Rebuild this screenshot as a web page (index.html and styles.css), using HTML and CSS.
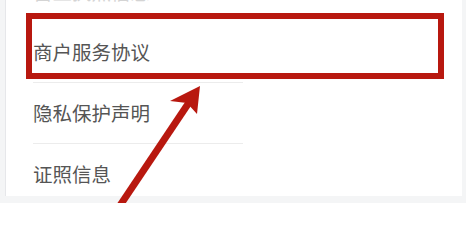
FILE: index.html
```html
<!DOCTYPE html>
<html lang="zh-CN">
<head>
<meta charset="utf-8">
<title>设置</title>
<link rel="stylesheet" href="styles.css">
</head>
<body>
<div class="page">
  <div class="card">
    <ul class="list">
      <li class="row row-first"><span class="label faded">营业执照信息</span></li>
      <li class="row"><span class="label">商户服务协议</span></li>
      <li class="row"><span class="label">隐私保护声明</span></li>
      <li class="row"><span class="label">证照信息</span></li>
    </ul>
  </div>
  <div class="highlight"></div>
  <svg class="arrow" width="466" height="203" viewBox="0 0 466 203">
    <line x1="190" y1="101" x2="117" y2="210" stroke="#b8180f" stroke-width="7"/>
    <polygon points="200,86 170,101 187,103 197,114" fill="#b8180f"/>
  </svg>
</div>
</body>
</html>
```

FILE: styles.css
```css
html, body {
  margin: 0;
  padding: 0;
  background: #ffffff;
}
body {
  font-family: "Noto Sans CJK SC", "Noto Sans", sans-serif;
  overflow: hidden;
}
.page {
  position: relative;
  width: 466px;
  height: 203px;
  overflow: hidden;
  background: #f4f5f6;
}
.card {
  margin-left: 5px;
  margin-right: 4px;
  height: 196px;
  background: #ffffff;
  border-left: 1px solid #e6e7ea;
  overflow: hidden;
}
.list {
  list-style: none;
  margin: -39px 0 0 0;
  padding: 0 0 0 27px;
}
.row {
  height: 60px;
  display: flex;
  align-items: center;
  border-bottom: 1px solid #ececec;
  width: 210px;
}
.row-first {
  border-bottom-color: transparent;
}
.label {
  font-size: 19.5px;
  color: #555555;
  white-space: nowrap;
  line-height: 1;
}
.faded {
  color: #d4d4d4;
  margin-top: 2px;
}
.highlight {
  position: absolute;
  left: 26px;
  top: 13px;
  width: 406px;
  height: 54px;
  border: 6px solid #b8180f;
}
.arrow {
  position: absolute;
  left: 0;
  top: 0;
}
```
